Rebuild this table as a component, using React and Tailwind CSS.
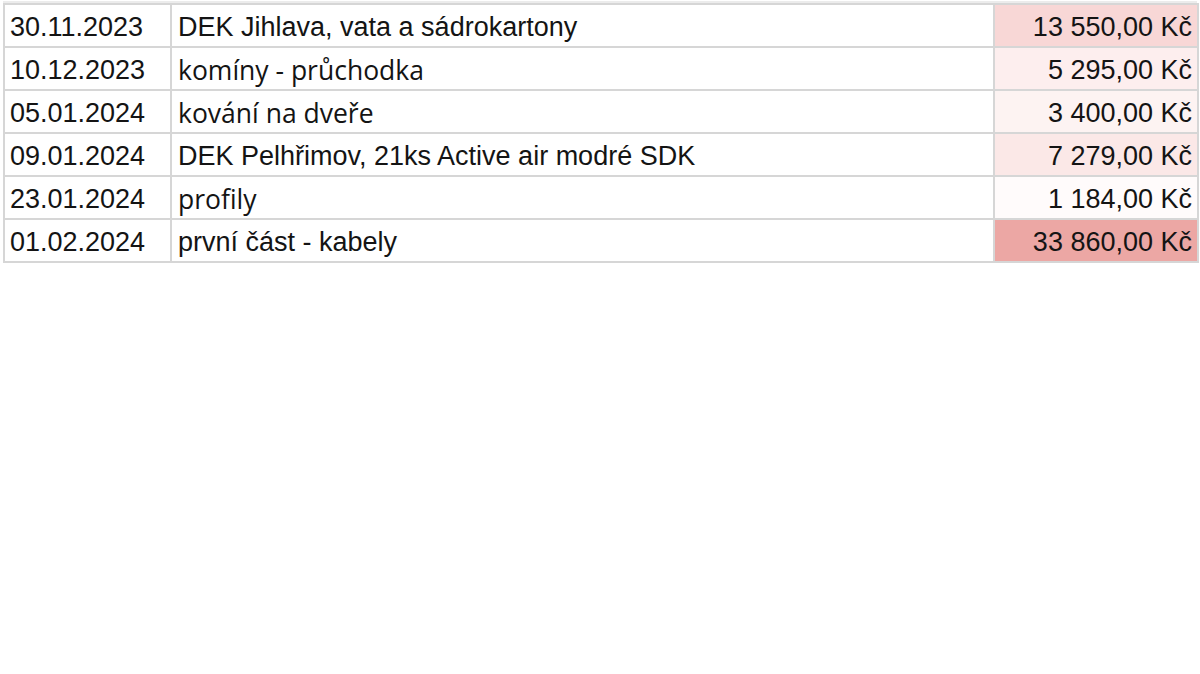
const rows = [
  { date: '30.11.2023', text: 'DEK Jihlava, vata a sádrokartony', amount: '13 550,00 Kč', bg: 'bg-[#f8d7d6]', open: false },
  { date: '10.12.2023', text: 'komíny - průchodka', amount: '5 295,00 Kč', bg: 'bg-[#fdeeee]', open: true },
  { date: '05.01.2024', text: 'kování na dveře', amount: '3 400,00 Kč', bg: 'bg-[#fdf3f2]', open: true },
  { date: '09.01.2024', text: 'DEK Pelhřimov, 21ks Active air modré SDK', amount: '7 279,00 Kč', bg: 'bg-[#fbe8e7]', open: false },
  { date: '23.01.2024', text: 'profily', amount: '1 184,00 Kč', bg: 'bg-[#fffbfb]', open: true },
  { date: '01.02.2024', text: 'první část - kabely', amount: '33 860,00 Kč', bg: 'bg-[#eca7a4]', open: false },
];

export default function App() {
  return (
    <div className="w-[1200px] h-[674px] bg-white pl-[3px] pt-[1px] text-[#141414]">
      <div className="w-[1194px] border-t-[2px] border-[#ececec]">
        <table className="w-full border-collapse" style={{ tableLayout: 'fixed' }}>
          <colgroup>
            <col className="w-[167px]" />
            <col className="w-[823px]" />
            <col className="w-[204px]" />
          </colgroup>
          <tbody>
            {rows.map((r) => (
              <tr key={r.date} className="h-[43px]">
                <td className="border-2 border-[#d6d6d6] px-[5px] pt-[3px] text-[27px] leading-none font-['Liberation_Sans',Arial,sans-serif] whitespace-nowrap">
                  {r.date}
                </td>
                <td
                  className={`border-2 border-[#d6d6d6] px-[6px] pt-[3px] leading-none whitespace-nowrap ${
                    r.open
                      ? "text-[26.5px] font-['Open_Sans',sans-serif]"
                      : "text-[27px] font-['Liberation_Sans',Arial,sans-serif]"
                  }`}
                >
                  {r.text}
                </td>
                <td className={`border-2 border-[#d6d6d6] px-[5px] pt-[3px] text-right text-[27px] leading-none font-['Liberation_Sans',Arial,sans-serif] whitespace-nowrap ${r.bg}`}>
                  {r.amount}
                </td>
              </tr>
            ))}
          </tbody>
        </table>
      </div>
    </div>
  );
}
